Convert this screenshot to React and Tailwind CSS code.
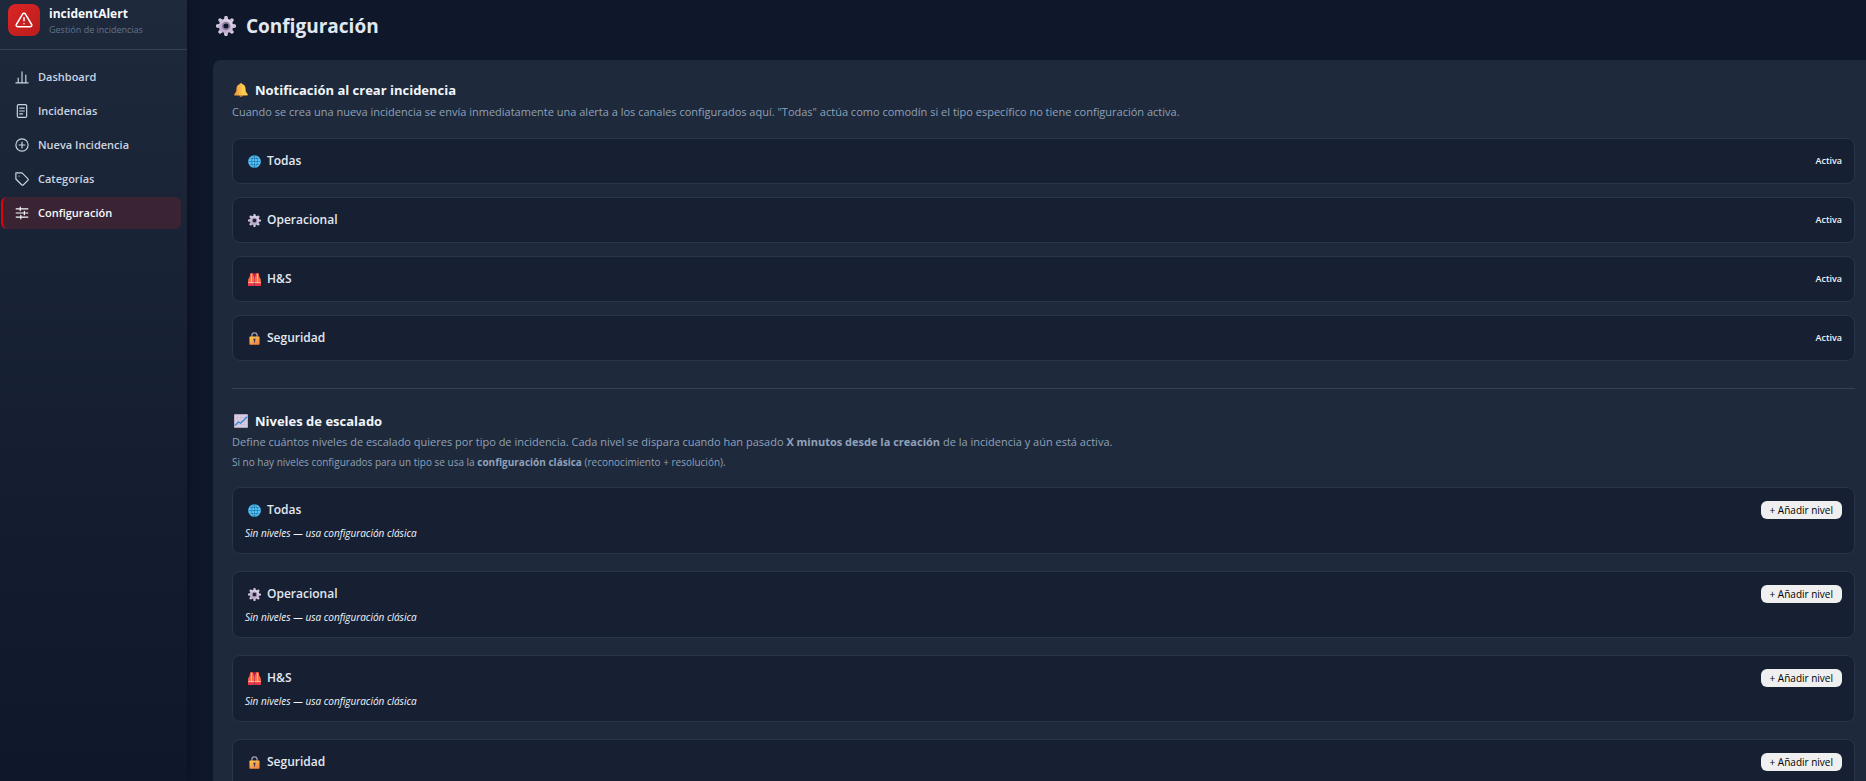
const NAV_ITEMS = [
  { key: 'dashboard', label: 'Dashboard' },
  { key: 'incidencias', label: 'Incidencias' },
  { key: 'nueva', label: 'Nueva Incidencia' },
  { key: 'categorias', label: 'Categorías' },
  { key: 'configuracion', label: 'Configuración' },
];

const TYPES = [
  { key: 'todas', label: 'Todas', Icon: GlobeIcon },
  { key: 'operacional', label: 'Operacional', Icon: GearIcon },
  { key: 'hs', label: 'H&S', Icon: VestIcon },
  { key: 'seguridad', label: 'Seguridad', Icon: LockIcon },
];

function GearIcon({ className }) {
  return (
    <svg viewBox="0 0 20 20" className={className} aria-hidden="true">
      <defs>
        <linearGradient id="gear" x1="0.8" y1="0" x2="0.2" y2="1">
          <stop offset="0" stopColor="#e3dbe9" />
          <stop offset="1" stopColor="#b5a2c6" />
        </linearGradient>
      </defs>
      <g fill="url(#gear)">
        {[0, 45, 90, 135, 180, 225, 270, 315].map((deg) => (
          <path
            key={deg}
            d="M7.7 4.5 8.3 1Q8.5 0 9.4 0H10.6Q11.5 0 11.7 1L12.3 4.5Z"
            transform={`rotate(${deg} 10 10)`}
          />
        ))}
        <path
          fillRule="evenodd"
          d="M10 2.8a7.2 7.2 0 1 0 0 14.4 7.2 7.2 0 0 0 0-14.4Zm0 4.4a2.8 2.8 0 1 1 0 5.6 2.8 2.8 0 0 1 0-5.6Z"
        />
      </g>
      <circle cx="10" cy="10" r="3.6" fill="none" stroke="#8d7b9f" strokeWidth="1.5" />
    </svg>
  );
}

function BellIcon({ className }) {
  return (
    <svg viewBox="0 0 16 16" className={className} aria-hidden="true">
      <defs>
        <linearGradient id="bell" x1="0" y1="0" x2="1" y2="0">
          <stop offset="0" stopColor="#f08c38" />
          <stop offset="0.65" stopColor="#ffd050" />
          <stop offset="1" stopColor="#ffbc48" />
        </linearGradient>
      </defs>
      <path d="M6 14h4a2 2 0 0 1-4 0Z" fill="#e0703a" />
      <path
        d="M8 .3c.9 0 1.600.5 1.700 1.200 2.100.6 3.400 2.500 3.500 4.800l.3 3.500 2.200 3c.4.800 0 1.600-.800 1.600H1.100c-.8 0-1.200-.8-.8-1.600l2.200-3 .3-3.500C2.900 4 4.200 2.100 6.300 1.500 6.400.8 7.100.3 8 .3Z"
        fill="url(#bell)"
      />
    </svg>
  );
}

function GlobeIcon({ className }) {
  return (
    <svg viewBox="0 0 16 16" className={className} aria-hidden="true">
      <circle cx="8" cy="8" r="7.8" fill="#52c4fa" />
      <g fill="none" stroke="#1c6796" strokeWidth="0.7">
        <ellipse cx="8" cy="8" rx="3.6" ry="7.2" />
        <path d="M8 .8v14.4M.8 8h14.4M2 4.3h12M2 11.7h12" />
      </g>
    </svg>
  );
}

function VestIcon({ className }) {
  return (
    <svg viewBox="0 0 16 16" className={className} aria-hidden="true">
      <path d="M4 .3h8v12H4Z" fill="#b3225c" />
      <path d="M2.800.3h3L7.700 6v9.700H.2V8Q2.400 6 2.800.3Z" fill="#ff6a45" />
      <path d="M13.200.3h-3L8.300 6v9.700h7.500V8Q13.600 6 13.200.3Z" fill="#ff6a45" />
      <path d="M.2 12.500h7.500v3.200H.2ZM8.300 12.500h7.500v3.200H8.300Z" fill="#ee2f4e" />
      <path d="M4.300 1v10.500M11.700 1v10.500M.2 11.800h7.500M8.300 11.800h7.500" stroke="#ffc5b5" fill="none" />
    </svg>
  );
}

function LockIcon({ className }) {
  return (
    <svg viewBox="0 0 16 16" className={className} aria-hidden="true">
      <defs>
        <linearGradient id="lock" x1="0" y1="0" x2="0.6" y2="1">
          <stop offset="0" stopColor="#ffcb4a" />
          <stop offset="1" stopColor="#f08a45" />
        </linearGradient>
      </defs>
      <path d="M4.800 7V4.300a3.200 3.200 0 0 1 6.400 0V7" fill="none" stroke="#a99bb5" strokeWidth="1.5" />
      <rect x="1.800" y="5.500" width="12.400" height="10.200" rx="1" fill="url(#lock)" />
      <circle cx="8" cy="9.500" r="1.400" fill="#46315c" />
      <path d="M7.400 10h1.200v3.200H7.400Z" fill="#46315c" />
    </svg>
  );
}

function ChartIcon({ className }) {
  return (
    <svg viewBox="0 0 16 16" className={className} aria-hidden="true">
      <rect x="0.2" y="0.2" width="15.6" height="15.6" rx="0.5" fill="#dccfe4" />
      <path d="M4.2.5v15M8 .5v15M11.8.5v15M.5 4.2h15M.5 8h15M.5 11.8h15" stroke="#c2b2cf" strokeWidth="0.6" />
      <path d="m.8 13.200 4.400-4 2.400 1.400L15 3.200" fill="none" stroke="#2f86d2" strokeWidth="1.5" />
    </svg>
  );
}

function NavIcon({ name }) {
  return (
    <svg
      viewBox="0 0 24 24"
      className="size-3.5 shrink-0"
      fill="none"
      stroke="currentColor"
      strokeWidth="2"
      strokeLinecap="round"
      strokeLinejoin="round"
      aria-hidden="true"
    >
      {name === 'dashboard' && <path d="M1.500 22h21M5.500 22v-8M12 22V3M18.500 22V8.500" />}
      {name === 'incidencias' && (
        <>
          <rect x="4" y="1" width="16" height="22" rx="2" />
          <path d="M8 7h8M8 12h8M8 17h5" />
        </>
      )}
      {name === 'nueva' && (
        <>
          <circle cx="12" cy="12" r="10.500" />
          <path d="M12 7v10M7 12h10" />
        </>
      )}
      {name === 'categorias' && (
        <>
          <path d="M1.500 1.500h10.500l9.900 9.900a2.200 2.200 0 0 1 0 3.100l-7.400 7.400a2.200 2.200 0 0 1-3.100 0L1.500 12Z" />
          <path d="M7 7h.01" />
        </>
      )}
      {name === 'configuracion' && (
        <path d="M2 5h20M2 12h20M2 19h20M9 2v6M16 9v6M10 16v6" />
      )}
    </svg>
  );
}

function Sidebar() {
  return (
    <aside className="sticky top-0 z-10 flex h-screen w-[187px] shrink-0 flex-col bg-linear-to-b from-[#1e293b] to-[#0f172a] shadow-[2px_0_10px_rgba(0,0,0,0.25)]">
      <div className="flex h-[50px] items-start gap-[9px] border-b border-[#334155] px-2 pt-1">
        <div className="flex size-8 shrink-0 items-center justify-center rounded-lg bg-linear-to-br from-[#dc2626] to-[#b91c1c] text-white">
          <svg
            viewBox="0 0 24 24"
            className="size-[18px]"
            fill="none"
            stroke="currentColor"
            strokeWidth="2"
            strokeLinecap="round"
            strokeLinejoin="round"
            aria-hidden="true"
          >
            <path d="M10.300 3.900 1.800 18a2 2 0 0 0 1.700 3h17a2 2 0 0 0 1.700-3L13.700 3.900a2 2 0 0 0-3.400 0Z" />
            <path d="M12 9v4M12 17h.01" />
          </svg>
        </div>
        <div>
          <div className="text-[12px] leading-5 font-bold text-slate-50">incidentAlert</div>
          <div className="text-[9px] leading-3 text-slate-500">Gestión de incidencias</div>
        </div>
      </div>
      <nav className="flex flex-col gap-0.5 pt-[11px] pr-1.5 pl-px">
        {NAV_ITEMS.map(({ key, label }) => (
          <a
            key={key}
            href={`#${key}`}
            className={`flex h-8 items-center gap-[9px] rounded-md border-l-2 pl-3 text-[11px] font-semibold ${
              key === 'configuracion'
                ? 'border-red-600 bg-[#3a2434] text-slate-50'
                : 'border-transparent text-slate-300'
            }`}
          >
            <NavIcon name={key} />
            {label}
          </a>
        ))}
      </nav>
    </aside>
  );
}

function TypeName({ Icon, label }) {
  return (
    <h3 className="flex items-center gap-1.5 pl-[3px] text-[12px] leading-5 font-semibold text-slate-200">
      <Icon className="size-[13px]" />
      {label}
    </h3>
  );
}

function SectionTitle({ Icon, children }) {
  return (
    <h2 className="flex items-center gap-[7px] pl-0.5 text-[13px] leading-[22px] font-bold text-slate-100">
      <Icon className="size-3.5" />
      {children}
    </h2>
  );
}

export default function App() {
  return (
    <div className="flex min-h-screen bg-[#0f172a] font-['Open_Sans','Noto_Sans',sans-serif] text-slate-200">
      <Sidebar />

      <main className="min-w-0 flex-1 pt-3 pl-[26px]">
        <h1 className="mb-5 flex items-center gap-2.5 pl-[3px] text-[19px] leading-7 font-bold text-slate-200">
          <GearIcon className="size-5" />
          Configuración
        </h1>

        <div className="rounded-l-lg bg-[#1e293b] pt-[19px] pr-[11px] pb-5 pl-[19px]">
          {/* Notificaciones */}
          <section>
            <SectionTitle Icon={BellIcon}>Notificación al crear incidencia</SectionTitle>
            <p className="mt-0.5 text-[11px] leading-[18px] text-slate-400">
              Cuando se crea una nueva incidencia se envía inmediatamente una alerta a los canales configurados
              aquí. "Todas" actúa como comodín si el tipo específico no tiene configuración activa.
            </p>
            <div className="mt-[17px] flex flex-col gap-[13px]">
              {TYPES.map(({ key, label, Icon }) => (
                <div
                  key={key}
                  className="flex items-center justify-between rounded-lg border border-[#293548] bg-[#172033] px-3 py-3"
                >
                  <TypeName Icon={Icon} label={label} />
                  <span className="text-[9px] font-semibold text-slate-100">Activa</span>
                </div>
              ))}
            </div>
          </section>

          <hr className="mt-[27px] mb-[21px] border-t border-[#334155]" />

          {/* Escalado */}
          <section>
            <SectionTitle Icon={ChartIcon}>Niveles de escalado</SectionTitle>
            <p className="mt-px text-[11px] leading-[18px] text-slate-400">
              Define cuántos niveles de escalado quieres por tipo de incidencia. Cada nivel se dispara cuando han
              pasado <strong>X minutos desde la creación</strong> de la incidencia y aún está activa.
            </p>
            <p className="mt-0.5 text-[10px] leading-[18px] text-slate-400">
              Si no hay niveles configurados para un tipo se usa la <strong>configuración clásica</strong>{' '}
              (reconocimiento + resolución).
            </p>
            <div className="mt-4 flex flex-col gap-[17px]">
              {TYPES.map(({ key, label, Icon }) => (
                <div key={key} className="rounded-lg border border-[#293548] bg-[#172033] px-3 py-3">
                  <div className="flex items-center justify-between">
                    <TypeName Icon={Icon} label={label} />
                    <button
                      type="button"
                      className="h-[18px] rounded-md bg-[#efefef] px-[9px] text-[10px] leading-[18px] text-black"
                    >
                      + Añadir nivel
                    </button>
                  </div>
                  <p className="mt-[5px] text-[10px] leading-4 text-slate-100 italic">
                    Sin niveles — usa configuración clásica
                  </p>
                </div>
              ))}
            </div>
          </section>
        </div>
      </main>
    </div>
  );
}
